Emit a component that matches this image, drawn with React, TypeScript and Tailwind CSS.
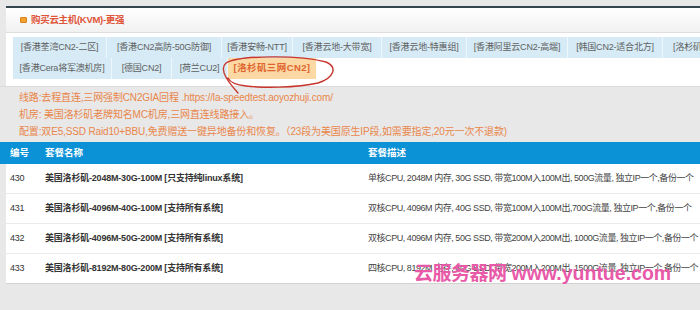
import { FC } from "react";

const tabsTop = [
    { label: "[香港荃湾CN2-二区]", w: "w-[94px]" },
    { label: "[香港CN2高防-50G防御]", w: "w-[115px]" },
    { label: "[香港安畅-NTT]", w: "w-[71px]" },
    { label: "[香港云地-大带宽]", w: "w-[89px]" },
    { label: "[香港云地-特惠组]", w: "w-[85px]" },
    { label: "[香港阿里云CN2-高端]", w: "w-[101px]" },
    { label: "[韩国CN2-适合北方]", w: "w-[95px]" },
    { label: "[洛杉矶CN2-高防]", w: "w-[90px]" },
];

const tabsBottom = [
    { label: "[香港Cera将军澳机房]", w: "w-[99px]" },
    { label: "[德国CN2]", w: "w-[60px]" },
    { label: "[荷兰CU2]", w: "w-[56px]" },
];

const plans = [
    { id: "430", name: "美国洛杉矶-2048M-30G-100M [只支持纯linux系统]", desc: "单核CPU, 2048M 内存, 30G SSD, 带宽100M入100M出, 500G流量, 独立IP一个,备份一个" },
    { id: "431", name: "美国洛杉矶-4096M-40G-100M [支持所有系统]", desc: "双核CPU, 4096M 内存, 40G SSD, 带宽100M入100M出,700G流量, 独立IP一个,备份一个" },
    { id: "432", name: "美国洛杉矶-4096M-50G-200M [支持所有系统]", desc: "双核CPU, 4096M 内存, 50G SSD, 带宽200M入200M出, 1000G流量, 独立IP一个,备份一个" },
    { id: "433", name: "美国洛杉矶-8192M-80G-200M [支持所有系统]", desc: "四核CPU, 8192M 内存, 80G SSD, 带宽200M入200M出, 1500G流量, 独立IP一个,备份一个" },
];

const Tab: FC<{ label: string; w: string }> = ({ label, w }) => (
    <div className={`${w} shrink-0 flex items-center justify-center border-r border-[#eef7fc] bg-[#d6ebf6] text-[9px] tracking-[-0.2px] text-[#5f5f5f] whitespace-nowrap`}>
        {label}
    </div>
);

export default function App() {
    return (
        <div className="relative w-[700px] h-[310px] overflow-hidden bg-[#e8e8e8] font-['Liberation_Sans','Noto_Sans_CJK_SC',sans-serif]">
            <div className="ml-[6px] mt-[6px] border-t-2 border-[#34454f] bg-white">
                <div className="h-[25px] flex items-center pl-[14px] gap-[4px] border-b border-[#dedede] bg-gradient-to-b from-white to-[#f1f1f1]">
                    <span className="w-[7px] h-[6px] rounded-[1px] bg-[#f2a02e] border border-[#d9831c]" />
                    <span className="text-[9.5px] font-bold tracking-[-0.3px] text-[#e0553a]">购买云主机(KVM)-更强</span>
                </div>
                <div className="h-[53px] pt-[4px] pl-[7px] overflow-hidden">
                    <div className="flex h-[21px] w-[760px]">
                        {tabsTop.map((t) => <Tab key={t.label} {...t} />)}
                    </div>
                    <div className="flex h-[21px]">
                        {tabsBottom.map((t) => <Tab key={t.label} {...t} />)}
                        <div className="w-[88px] flex items-center justify-center bg-[#fbd8a4] text-[9.5px] font-bold tracking-[0.4px] text-[#e0642e] whitespace-nowrap">
                            [洛杉矶三网CN2]
                        </div>
                    </div>
                </div>
            </div>
            <div className="border-t border-[#dcdcdc] pt-[2px] pb-[2px] pl-[19px] text-[10px] tracking-[-0.15px] leading-[17px] text-[#e9864a] whitespace-nowrap">
                <p>线路:去程直连,三网强制CN2GIA回程 .https://la-speedtest.aoyozhuji.com/</p>
                <p>机房: 美国洛杉矶老牌知名MC机房,三网直连线路接入。</p>
                <p>配置:双E5,SSD Raid10+BBU,免费赠送一键异地备份和恢复。（23段为美国原生IP段,如需要指定,20元一次不退款)</p>
            </div>
            <div className="grid grid-cols-[35px_323px_1fr] h-[22px] items-center pl-[10px] bg-[#0b91d5] text-[9.5px] font-bold text-white">
                <span>编号</span>
                <span>套餐名称</span>
                <span>套餐描述</span>
            </div>
            <div className="ml-[6px] bg-white">
                {plans.map((p, i) => (
                    <div
                        key={p.id}
                        className={`grid grid-cols-[35px_323px_1fr] h-[30px] items-center pl-[4px] text-[9px] tracking-[-0.2px] text-[#333] whitespace-nowrap ${i === plans.length - 1 ? "border-b border-[#d2d2d2]" : "border-b border-[#ebebeb]"}`}
                    >
                        <span>{p.id}</span>
                        <span className="font-bold">{p.name}</span>
                        <span className="text-[#444] tracking-[-0.45px]">{p.desc}</span>
                    </div>
                ))}
            </div>

            {/* hand drawn mark round the chosen tab */}
            <svg className="absolute left-0 top-0 pointer-events-none" width="700" height="310">
                <path
                    d="M238 93 C230 84 218 70 226 63 C240 55 300 55 326 62 C338 67 334 78 318 83 C296 88 262 88 246 86 C236 85 230 82 228 78"
                    fill="none"
                    stroke="#c7352d"
                    strokeWidth="1.4"
                    strokeLinecap="round"
                />
            </svg>

            {/* site watermark */}
            <div className="absolute left-[414px] top-[259px] flex items-baseline gap-[5px] font-bold text-[#e85aa8] whitespace-nowrap leading-[28px]">
                <span className="text-[19px] tracking-[-0.5px]">云服务器网</span>
                <span className="text-[19.5px]">www.yuntue.com</span>
            </div>
        </div>
    );
}
